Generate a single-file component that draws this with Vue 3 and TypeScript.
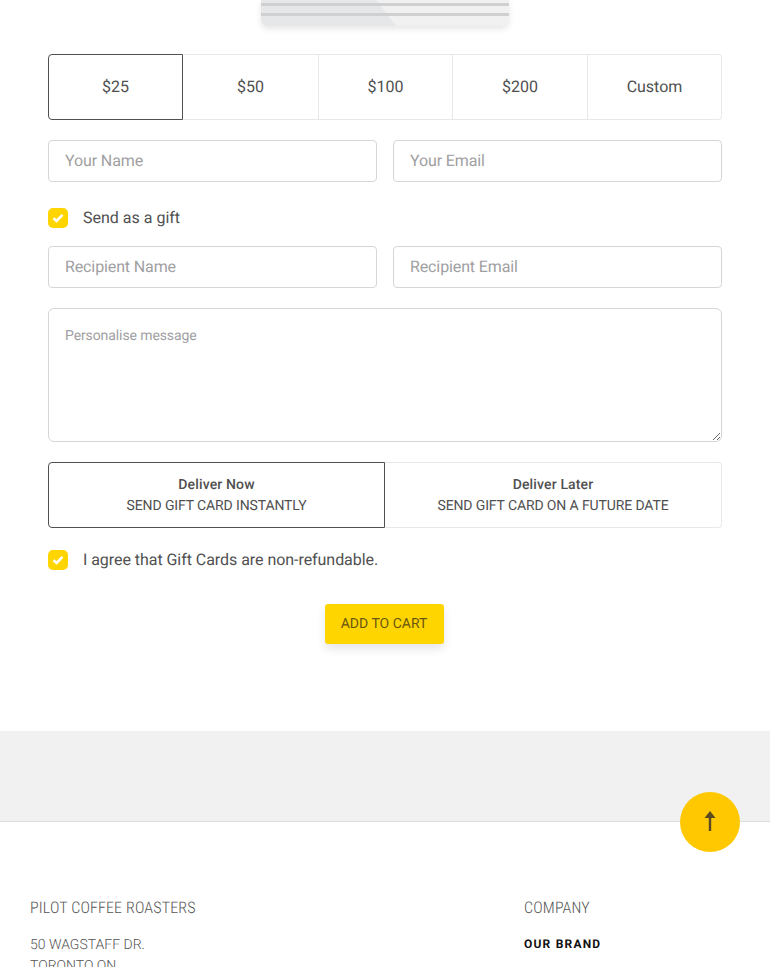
<template>
  <div class="page">
    <!-- card preview, only its bottom edge is in view -->
    <div class="preview-wrap">
      <div class="preview">
        <div class="preview-shade"></div>
        <div class="preview-line line-one"></div>
        <div class="preview-line line-two"></div>
      </div>
    </div>

    <form class="gift-form" @submit.prevent>
      <div class="amounts">
        <button
          v-for="a in amounts"
          :key="a"
          type="button"
          class="amount"
          :class="{ active: a === amount }"
          @click="amount = a"
        >{{ a }}</button>
      </div>

      <div class="field-row">
        <input class="field" type="text" placeholder="Your Name" />
        <input class="field" type="email" placeholder="Your Email" />
      </div>

      <label class="check-row gift-check">
        <span class="check-box">
          <svg width="12" height="10" viewBox="0 0 12 10"><path d="M1.5 5.2 4.6 8 10.5 1.8" fill="none" stroke="#fff" stroke-width="2.6" /></svg>
        </span>
        <span>Send as a gift</span>
      </label>

      <div class="field-row">
        <input class="field" type="text" placeholder="Recipient Name" />
        <input class="field" type="email" placeholder="Recipient Email" />
      </div>

      <textarea class="message" placeholder="Personalise message"></textarea>

      <div class="delivery">
        <button
          v-for="d in deliveries"
          :key="d.title"
          type="button"
          class="delivery-opt"
          :class="{ active: d.title === delivery }"
          @click="delivery = d.title"
        >
          <strong>{{ d.title }}</strong>
          <span>{{ d.note }}</span>
        </button>
      </div>

      <label class="check-row agree-check">
        <span class="check-box">
          <svg width="12" height="10" viewBox="0 0 12 10"><path d="M1.5 5.2 4.6 8 10.5 1.8" fill="none" stroke="#fff" stroke-width="2.6" /></svg>
        </span>
        <span class="agree-text">I agree that Gift Cards are non-refundable.</span>
      </label>

      <div class="cart-wrap">
        <button type="submit" class="cart-btn">ADD TO CART</button>
      </div>
    </form>

    <div class="band">
      <button type="button" class="to-top" aria-label="Back to top">
        <svg width="12" height="20" viewBox="0 0 12 20"><path d="M6 20V5" stroke="#5a4a20" stroke-width="2.4" fill="none" /><path d="M.5 7 6 0l5.500 7z" fill="#5a4a20" /></svg>
      </button>
    </div>

    <footer class="footer">
      <div class="foot-col">
        <h4>PILOT COFFEE ROASTERS</h4>
        <p>50 WAGSTAFF DR.</p>
        <p>TORONTO ON</p>
      </div>
      <div class="foot-col">
        <h4>COMPANY</h4>
        <a class="foot-link">OUR BRAND</a>
      </div>
    </footer>
  </div>
</template>

<script setup lang="ts">
import { ref } from 'vue';

const amounts = ['$25', '$50', '$100', '$200', 'Custom'];
const amount = ref('$25');

const deliveries = [
  { title: 'Deliver Now', note: 'SEND GIFT CARD INSTANTLY' },
  { title: 'Deliver Later', note: 'SEND GIFT CARD ON A FUTURE DATE' },
];
const delivery = ref('Deliver Now');
</script>

<style>
html, body { margin: 0; background: #fff; }
</style>

<style scoped>
.page {
  height: 967px;
  overflow: hidden;
  font-family: Roboto, "Liberation Sans", sans-serif;
  color: #505050;
  background: #fff;
  text-rendering: geometricPrecision;
}
.page button,
.page input,
.page textarea { text-rendering: geometricPrecision; }

.preview-wrap {
  display: flex;
  justify-content: center;
  height: 54px;
}
.preview {
  position: relative;
  width: 248px;
  height: 26px;
  background: #f1f1f1;
  border-radius: 0 0 7px 7px;
  box-shadow: 0 3px 6px rgba(0,0,0,0.1);
  overflow: hidden;
}
.preview-shade {
  position: absolute;
  inset: 0;
  background: #e6e7e9;
  clip-path: polygon(0 0, 115px 0, 135px 100%, 0 100%);
  filter: blur(0.5px);
}
.preview-line {
  position: absolute;
  left: 0;
  right: 0;
  height: 3px;
  background: #cfd0d2;
  filter: blur(0.5px);
}
.line-one { top: 3px; }
.line-two { top: 13px; }

.gift-form {
  padding: 0 48px;
  height: 677px;
  box-sizing: border-box;
}

.amounts {
  display: grid;
  grid-template-columns: 135px 136px 134px 135px 134px;
  height: 66px;
  margin-bottom: 20px;
}
.amount {
  border: 1px solid #e8e8e8;
  border-left-width: 0;
  background: #fff;
  font: 400 16px Roboto, sans-serif;
  color: #505050;
  padding: 0 0 2px;
}
.amount:last-child { border-radius: 0 4px 4px 0; }
.amount.active {
  border: 1px solid #505050;
  border-radius: 4px 0 0 4px;
}

.field-row {
  display: grid;
  grid-template-columns: 1fr 1fr;
  gap: 16px;
}
.field {
  height: 42px;
  box-sizing: border-box;
  min-width: 0;
  border: 1px solid #d6d6d6;
  border-radius: 4px;
  padding: 0 16px 2px;
  font: 400 16px Roboto, sans-serif;
  letter-spacing: -0.12px;
  color: #505050;
}
.field::placeholder,
.message::placeholder { color: #a0a0a2; opacity: 1; }

.check-row {
  display: flex;
  align-items: center;
  gap: 15px;
  font-size: 16px;
  line-height: 20px;
}
.gift-check { margin: 26px 0 18px; }
.agree-check { margin: 22px 0 34px; }
.agree-text { letter-spacing: -0.05px; }
.check-box {
  width: 20px;
  height: 20px;
  border-radius: 5px;
  background: #ffd500;
  display: flex;
  align-items: center;
  justify-content: center;
}

.message {
  display: block;
  width: 100%;
  height: 134px;
  box-sizing: border-box;
  margin: 20px 0;
  border: 1px solid #d6d6d6;
  border-radius: 6px;
  padding: 19px 16px 16px;
  font: 400 14px Roboto, sans-serif;
  letter-spacing: -0.1px;
  color: #505050;
  outline: none;
}

.delivery {
  display: grid;
  grid-template-columns: 337px 337px;
  height: 66px;
}
.delivery-opt {
  display: flex;
  flex-direction: column;
  align-items: center;
  justify-content: center;
  gap: 3px;
  border: 1px solid #e8e8e8;
  border-left-width: 0;
  border-radius: 0 4px 4px 0;
  background: #fff;
  font: 400 14px/18px Roboto, sans-serif;
  color: #505050;
  padding: 0;
}
.delivery-opt strong { font-weight: 500; letter-spacing: 0.15px; }
.delivery-opt span { letter-spacing: -0.12px; }
.delivery-opt.active {
  border: 1px solid #505050;
  border-radius: 4px 0 0 4px;
}

.cart-wrap {
  display: flex;
  justify-content: center;
  padding-right: 2px;
}
.cart-btn {
  width: 119px;
  height: 40px;
  border: none;
  border-radius: 3px;
  background: #ffd500;
  color: #6a5510;
  font: 400 14px Roboto, sans-serif;
  padding: 0;
  box-shadow: 0 5px 10px rgba(0,0,0,0.1);
}

.band {
  position: relative;
  height: 90px;
  background: #f1f1f2;
  border-bottom: 1px solid #dedede;
}
.to-top {
  position: absolute;
  right: 30px;
  top: 61px;
  width: 60px;
  height: 60px;
  border: none;
  border-radius: 50%;
  background: #ffc800;
  padding: 0 1px 2px 0;
  display: flex;
  align-items: center;
  justify-content: center;
}

.footer {
  display: grid;
  grid-template-columns: 494px 1fr;
  padding: 76px 30px 0;
}
.foot-col h4 {
  margin: 0 0 17px;
  font: 300 16px/20px "Roboto Condensed", "Liberation Sans Narrow", Roboto, sans-serif;
  letter-spacing: 0.15px;
  color: #555;
}
.foot-col p {
  margin: 0;
  font: 300 14px/21px Roboto, sans-serif;
  color: #555;
}
.foot-link {
  display: block;
  font: 700 12px/18px Roboto, sans-serif;
  letter-spacing: 1.2px;
  color: #111;
}
</style>
